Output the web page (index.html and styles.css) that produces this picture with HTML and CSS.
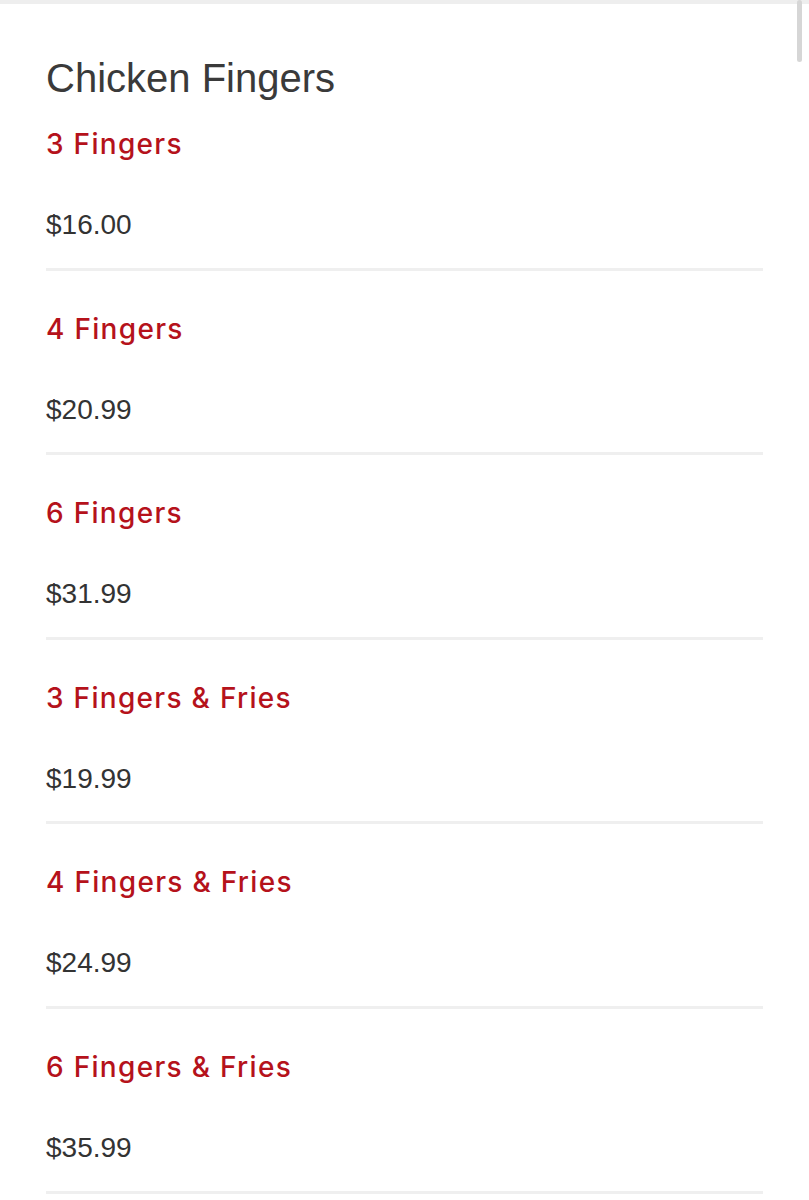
FILE: index.html
```html
<!DOCTYPE html>
<html lang="en">
<head>
  <meta charset="UTF-8">
  <meta name="viewport" content="width=device-width, initial-scale=1.0">
  <title>Chicken Fingers</title>
  <link rel="stylesheet" href="styles.css">
</head>
<body>
  <div class="scroll-thumb"></div>
  <div class="menu-section">
    <h2 class="section-title">Chicken Fingers</h2>
    <div class="item first">
      <p class="item-name">3 Fingers</p>
      <p class="item-price">$16.00</p>
    </div>
    <div class="item">
      <p class="item-name">4 Fingers</p>
      <p class="item-price">$20.99</p>
    </div>
    <div class="item">
      <p class="item-name">6 Fingers</p>
      <p class="item-price">$31.99</p>
    </div>
    <div class="item">
      <p class="item-name">3 Fingers &amp; Fries</p>
      <p class="item-price">$19.99</p>
    </div>
    <div class="item">
      <p class="item-name">4 Fingers &amp; Fries</p>
      <p class="item-price">$24.99</p>
    </div>
    <div class="item">
      <p class="item-name">6 Fingers &amp; Fries</p>
      <p class="item-price">$35.99</p>
    </div>
  </div>
</body>
</html>
```

FILE: styles.css
```css
body {
  font-family: 'Open Sans', 'Liberation Sans', sans-serif;
  margin: 0;
  padding: 0;
  background-color: #fff;
  border-top: 4px solid #eeeeee;
}
.scroll-thumb {
  position: fixed;
  top: 0;
  right: 7px;
  width: 5px;
  height: 62px;
  border-radius: 3px;
  background-color: #d6d6d6;
}
.menu-section {
  padding: 52px 46px 0;
}
.section-title {
  margin: 0;
  font-family: 'Liberation Sans', Arial, sans-serif;
  font-size: 40px;
  line-height: 44px;
  font-weight: normal;
  color: #3a3a3a;
}
.item {
  padding: 42px 0 27.6px;
  border-bottom: 3px solid #efefef;
}
.item.first {
  padding-top: 28px;
}
.item-name {
  margin: 0 0 50px;
  font-family: 'Inter', 'Open Sans', sans-serif;
  font-size: 28px;
  line-height: 32px;
  font-weight: 500;
  color: #b5121b;
  letter-spacing: 1.3px;
}
.item-price {
  margin: 0;
  font-family: 'Liberation Sans', Arial, sans-serif;
  font-size: 28px;
  line-height: 30px;
  color: #333;
}
```
